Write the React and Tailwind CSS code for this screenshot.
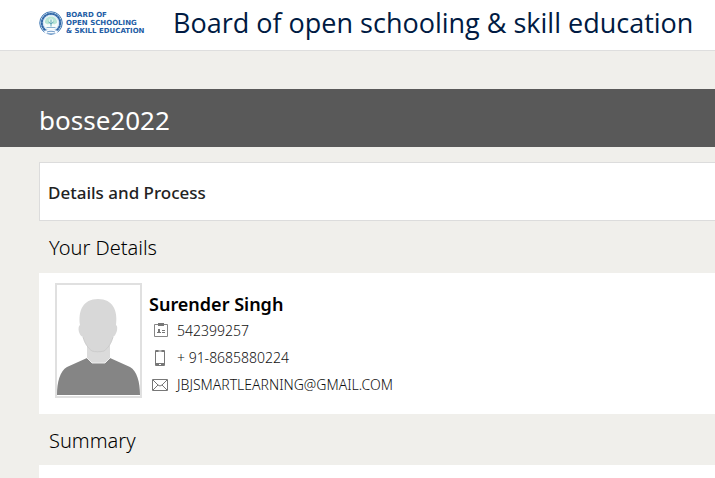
const sans = "font-['Noto_Sans','Open_Sans',sans-serif]";

function Emblem() {
  return (
    <svg viewBox="0 0 48 48" className="size-6 shrink-0" aria-hidden="true">
      <circle cx="24" cy="24" r="22.5" fill="#e3eef8" stroke="#3f78b5" strokeWidth="2" />
      <circle cx="24" cy="24" r="18.5" fill="none" stroke="#5485b9" strokeWidth="4" />
      <circle cx="24" cy="24" r="18.5" fill="none" stroke="#2c62a3" strokeWidth="3" strokeDasharray="4 2" />
      <circle cx="24" cy="24" r="15" fill="#f6fcfb" stroke="#c2d8ea" strokeWidth="1" />
      <path d="M12 24c-1-8 5-13 12-13s13 5 12 13l-6 3-6-5-6 5z" fill="#b7e5d5" />
      <circle cx="24" cy="19" r="4" fill="#e4f6f1" />
      <path d="M24 17v14M24 26l-5-4M24 26l5-4" stroke="#5aa5b5" strokeWidth="2" fill="none" />
      <path d="M15 33h18" stroke="#8bb2d2" strokeWidth="2" />
      <path d="M10 40c9-4 19-4 28 0l-3 6c-7-3-15-3-22 0z" fill="#f7fbff" />
      <path d="M16 42c5-2 11-2 16 0" stroke="#6d98c6" strokeWidth="2" fill="none" />
    </svg>
  );
}

function Avatar() {
  return (
    <svg viewBox="0 0 83 110" preserveAspectRatio="none" className="block h-[110px] w-full" role="img" aria-label="Profile photo">
      <path d="M30 60h23v16l-4 4H34l-4-4z" fill="#dbdbdb" />
      <path d="M30 73L10 82C3 86 0 97 0 110h83c0-13-3-24-10-28L53 73l-5 5H35z" fill="#858585" />
      <path d="M30 73l5 5h13l5-5" fill="none" stroke="#eee" />
      <path d="M23 40c-2-14 3-26 18-26s20 12 18 26c3 2 0 11-3 12-2 7-5 11-9 14-4 1-9 1-12 0-4-3-7-7-9-14-4-1-6-10-3-12z" fill="#d8d8d8" />
      <path d="M26 52c2 7 5 11 9 14 3 1 8 1 12 0 4-3 7-7 9-14" fill="none" stroke="#ccc" />
    </svg>
  );
}

function IdIcon() {
  return (
    <svg viewBox="0 0 16 16" className="size-4 shrink-0" aria-hidden="true" fill="none" stroke="#858585">
      <path d="M2.5 1.5h13v12h-13z" />
      <path d="M6 1.5h6" stroke="#777" strokeWidth="3" />
      <path d="M5 9.5h4M10 7.5h3M10 9.5h3" stroke="#777" />
      <path d="M6 6h2v3H6z" fill="#777" stroke="none" />
    </svg>
  );
}

function PhoneIcon() {
  return (
    <svg viewBox="0 0 16 16" className="size-4 shrink-0" aria-hidden="true">
      <path d="M4 0h8q1 0 1 1v14q0 1-1 1H4q-1 0-1-1V1q0-1 1-1zm0 2v11h8V2z" fill="#777" fillRule="evenodd" />
      <path d="M6.5 1h3M7 14.5h2" stroke="#fff" />
    </svg>
  );
}

function MailIcon() {
  return (
    <svg viewBox="0 0 16 16" className="size-4 shrink-0" aria-hidden="true" fill="none" stroke="#777">
      <path d="M.5 2.5h15v11H.5z" />
      <path d="M1 3l5 5q2 2 4 0l5-5M1 13l5-5M15 13l-5-5" />
    </svg>
  );
}

function Detail({ icon, children }) {
  return (
    <li className="flex h-[27px] items-center gap-[9px]">
      {icon}
      <span>{children}</span>
    </li>
  );
}

export default function App() {
  return (
    <div className={`min-h-screen bg-[#f0efeb] text-black ${sans}`}>
      <header className="flex h-[51px] items-center gap-6 overflow-hidden border-b border-[#dedede] bg-white pb-1 pl-[39px]">
        <a href="#home" className="flex w-[110px] shrink-0 items-center gap-[3px] font-['DejaVu_Sans',sans-serif] text-[7px] leading-[8px] font-bold whitespace-nowrap text-[#235da5]">
          <Emblem />
          <span>BOARD OF<br />OPEN SCHOOLING<br />&amp; SKILL EDUCATION</span>
        </a>
        <h1 className="font-['Open_Sans',sans-serif] text-[27px] leading-9 whitespace-nowrap text-[#001a42]">Board of open schooling &amp; skill education</h1>
      </header>
      <div className="mt-[38px] flex h-[58px] items-center bg-[#595959] pt-1 pl-[39px] text-[26px] text-white">
        <h2>bosse2022</h2>
      </div>
      <main className="pt-[15px] pl-[39px]">
        <div className="flex h-[59px] items-center border border-r-0 border-[#dcdcdc] bg-white pt-[3px] pl-2">
          <h3 className="text-[17px] font-medium text-[#222]">Details and Process</h3>
        </div>
        <h3 className="flex h-[52px] items-center pt-px pl-[10px] text-[20px] font-light">Your Details</h3>
        <section className="flex gap-[7px] bg-white pt-[10px] pr-4 pb-4 pl-4">
          <div className="w-[87px] shrink-0 border-2 border-[#e0e0e0]"><Avatar /></div>
          <div className="pt-2">
            <h4 className="text-[18px] leading-[26px] font-semibold">Surender Singh</h4>
            <ul className="pl-[3px] text-[14px] font-light text-[#111]">
              <Detail icon={<IdIcon />}>542399257</Detail>
              <Detail icon={<PhoneIcon />}>+ 91-8685880224</Detail>
              <Detail icon={<MailIcon />}>JBJSMARTLEARNING@GMAIL.COM</Detail>
            </ul>
          </div>
        </section>
        <h3 className="flex h-[51px] items-center pt-[3px] pl-[10px] text-[20px] font-light">Summary</h3>
        <section className="h-[13px] bg-white" />
      </main>
    </div>
  );
}
